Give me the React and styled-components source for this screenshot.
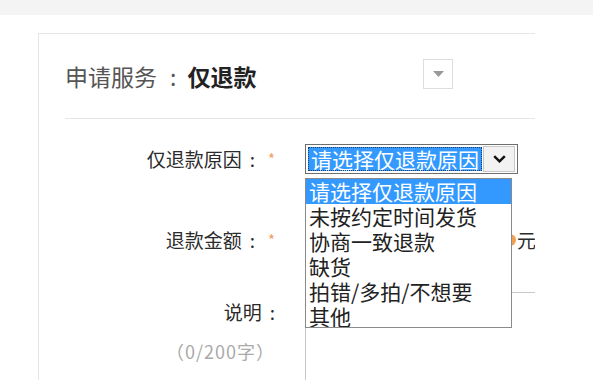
import styled, { createGlobalStyle } from "styled-components";

const GlobalStyle = createGlobalStyle`
  html, body {
    margin: 0;
    padding: 0;
    background: #fff;
  }
  body {
    font-family: "Noto Sans CJK SC", "Noto Sans", sans-serif;
    color: #333;
  }
`;

const TopBand = styled.div`
  height: 15px;
  background: #f4f4f4;
`;

const Page = styled.div`
  padding: 18px 0 0 38px;
`;

const Card = styled.div`
  width: 497px;
  height: 347px;
  box-sizing: border-box;
  border-top: 1px solid #e6e6e6;
  border-left: 1px solid #e6e6e6;
  padding-left: 26px;
  overflow: hidden;
`;

const Header = styled.div`
  height: 84px;
  display: flex;
  align-items: center;
  justify-content: space-between;
  padding-right: 82px;
  border-bottom: 1px solid #e5e5e5;
`;

const Title = styled.div`
  font-size: 23px;
  line-height: 28px;
  display: flex;
  align-items: center;
`;

const TitleLabel = styled.span`
  color: #555;
`;

const TitleColon = styled.span`
  color: #555;
  margin: 0 11px 0 13px;
`;

const TitleValue = styled.span`
  color: #222;
  font-weight: 700;
`;

const MiniSelect = styled.div`
  width: 30px;
  height: 30px;
  box-sizing: border-box;
  border: 1px solid #ddd;
  display: flex;
  align-items: center;
  justify-content: center;
  margin-top: -4px;
`;

const Form = styled.div`
  padding-top: 25px;
`;

const Row = styled.div`
  display: flex;
  align-items: ${(p) => (p.$top ? "flex-start" : "center")};
  margin-top: ${(p) => p.$gap || 0}px;

  & > * {
    flex-shrink: 0;
  }
`;

const LabelCol = styled.div`
  width: 210px;
  margin-right: 30px;
  text-align: right;
  font-size: 19px;
  line-height: 28px;
  color: #2b2b2b;
  padding-top: ${(p) => p.$pad || 0}px;
`;

const Colon = styled.span`
  margin-left: 8px;
`;

const Star = styled.span`
  color: #f2a060;
  font-size: 15px;
  margin-left: 13px;
  vertical-align: top;
`;

const Counter = styled.div`
  margin-top: 14px;
  font-size: 18px;
  line-height: 22px;
  letter-spacing: 1px;
  color: #aaa;
`;

const SelectWrap = styled.div`
  position: relative;
`;

const Select = styled.div`
  width: 213px;
  height: 30px;
  box-sizing: border-box;
  border: 1px solid #6e6e6e;
  background: #fff;
  display: flex;
  align-items: center;
  padding: 2px;
`;

const SelectedText = styled.div`
  height: 24px;
  padding: 0 3px;
  background: #3399ff;
  color: #fff;
  font-size: 21px;
  line-height: 24px;
  outline: 1px dotted #1a3e66;
  outline-offset: -1px;
  white-space: nowrap;
`;

const ArrowButton = styled.div`
  margin-left: auto;
  width: 32px;
  height: 26px;
  box-sizing: border-box;
  border: 1px solid #c8c8c8;
  background: #f2f2f2;
  display: flex;
  align-items: center;
  justify-content: center;
`;

const OptionList = styled.div`
  position: absolute;
  top: 34px;
  left: 0;
  width: 207px;
  height: 150px;
  box-sizing: border-box;
  border: 1px solid #8a8a8a;
  background: #fff;
  overflow: hidden;
  z-index: 2;
`;

const Option = styled.div`
  font-size: 21px;
  line-height: 25px;
  padding: 0 3px;
  white-space: nowrap;
  background: ${(p) => (p.$active ? "#3399ff" : "transparent")};
  color: ${(p) => (p.$active ? "#fff" : "#222")};
`;

const AmountInput = styled.div`
  width: 199px;
  height: 30px;
  box-sizing: border-box;
  border: 1px solid #ccc;
`;

const HintDot = styled.span`
  width: 12px;
  height: 12px;
  border-radius: 50%;
  background: #f0a050;
`;

const Unit = styled.span`
  margin-left: 1px;
  font-size: 19px;
  line-height: 28px;
  color: #2b2b2b;
`;

const TextArea = styled.div`
  width: 260px;
  height: 120px;
  box-sizing: border-box;
  border: 1px solid #c8c8c8;
`;

const options = [
  "请选择仅退款原因",
  "未按约定时间发货",
  "协商一致退款",
  "缺货",
  "拍错/多拍/不想要",
  "其他",
];

export default function App() {
  return (
    <>
      <GlobalStyle />
      <TopBand />
      <Page>
        <Card>
          <Header>
            <Title>
              <TitleLabel>申请服务</TitleLabel>
              <TitleColon>:</TitleColon>
              <TitleValue>仅退款</TitleValue>
            </Title>
            <MiniSelect>
              <svg width="11" height="6" viewBox="0 0 11 6">
                <polygon points="0,0 11,0 5.5,6" fill="#999" />
              </svg>
            </MiniSelect>
          </Header>
          <Form>
            <Row>
              <LabelCol>
                仅退款原因<Colon>:</Colon>
                <Star>*</Star>
              </LabelCol>
              <SelectWrap>
                <Select>
                  <SelectedText>请选择仅退款原因</SelectedText>
                  <ArrowButton>
                    <svg width="13" height="8" viewBox="0 0 13 8">
                      <polyline
                        points="1.2,1.2 6.5,6.4 11.8,1.2"
                        fill="none"
                        stroke="#111"
                        strokeWidth="2.4"
                      />
                    </svg>
                  </ArrowButton>
                </Select>
                <OptionList>
                  {options.map((o, i) => (
                    <Option key={o} $active={i === 0}>
                      {o}
                    </Option>
                  ))}
                </OptionList>
              </SelectWrap>
            </Row>
            <Row $gap={51}>
              <LabelCol>
                退款金额<Colon>:</Colon>
                <Star>*</Star>
              </LabelCol>
              <AmountInput />
              <HintDot />
              <Unit>元</Unit>
            </Row>
            <Row $gap={37} $top>
              <LabelCol $pad={6}>
                说明<Colon>:</Colon>
                <Counter>（0/200字）</Counter>
              </LabelCol>
              <TextArea />
            </Row>
          </Form>
        </Card>
      </Page>
    </>
  );
}
